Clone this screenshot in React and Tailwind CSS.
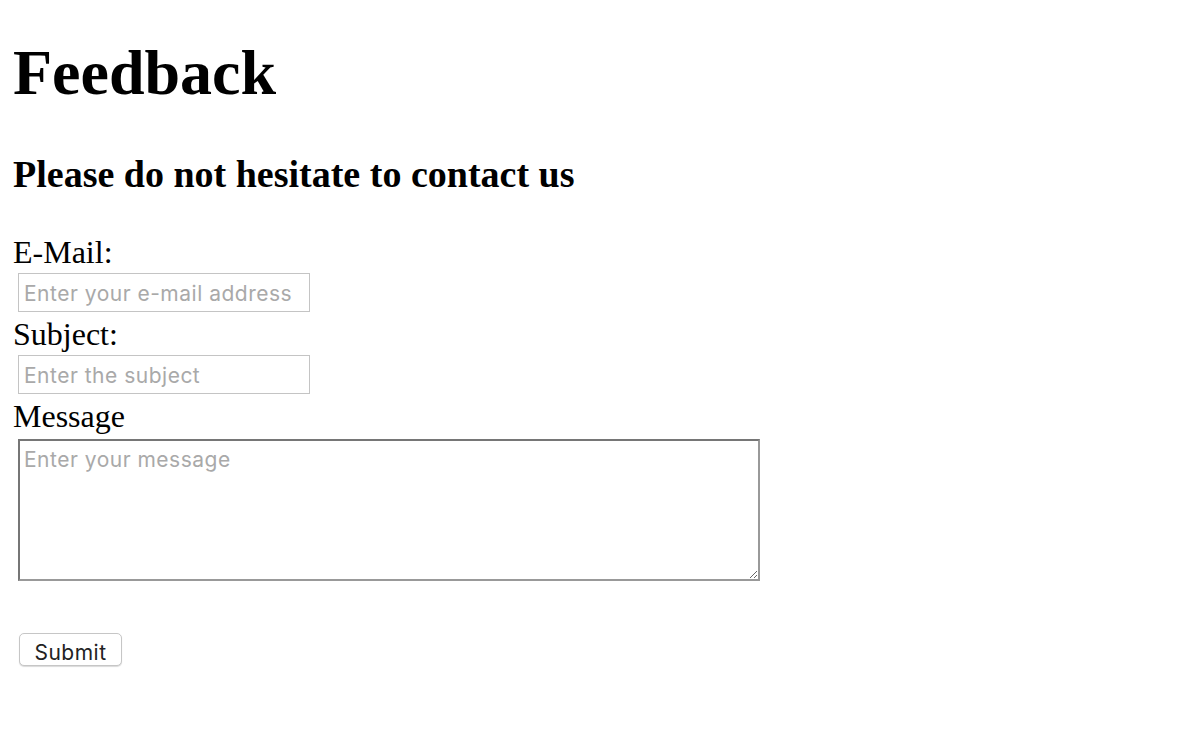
export default function App() {
  return (
    <div className="min-h-screen bg-white pl-[13px] text-black [font-family:'Liberation_Serif','Times_New_Roman',serif]">
      <h1 className="pt-[36px] text-[64px] font-bold leading-[74px]">Feedback</h1>
      <h2 className="mt-[42px] text-[38px] font-bold leading-[44px]">
        Please do not hesitate to contact us
      </h2>

      <form className="mt-[38px] flex flex-col items-start" onSubmit={(e) => e.preventDefault()}>
        <label htmlFor="email" className="text-[32px] leading-[37px]">
          E-Mail:
        </label>
        <input
          id="email"
          type="email"
          placeholder="Enter your e-mail address"
          className="mt-[2px] ml-[5px] h-[39px] w-[292px] border border-[#c4c4c4] bg-white pt-[2px] pl-[5px] text-[21px] tracking-[0.5px] text-black outline-none placeholder:text-[#a9a9a9] [font-family:Inter,'Noto_Sans',sans-serif]"
        />

        <label htmlFor="subject" className="mt-[4px] text-[32px] leading-[37px]">
          Subject:
        </label>
        <input
          id="subject"
          type="text"
          placeholder="Enter the subject"
          className="mt-[2px] ml-[5px] h-[39px] w-[292px] border border-[#c4c4c4] bg-white pt-[2px] pl-[5px] text-[21px] tracking-[0.5px] text-black outline-none placeholder:text-[#a9a9a9] [font-family:Inter,'Noto_Sans',sans-serif]"
        />

        <label htmlFor="message" className="mt-[4px] text-[32px] leading-[37px]">
          Message
        </label>
        <textarea
          id="message"
          placeholder="Enter your message"
          className="mt-[4px] ml-[5px] h-[142px] w-[742px] resize border-2 border-t-[#767676] border-l-[#767676] border-r-[#999999] border-b-[#999999] bg-white px-[4px] pt-[7px] text-[21px] leading-[24px] tracking-[0.5px] text-black outline-none placeholder:text-[#a9a9a9] [font-family:Inter,'Noto_Sans',sans-serif]"
        />

        <button
          type="submit"
          className="mt-[52px] ml-[6px] h-[33px] w-[103px] rounded-[5px] border border-[#c6c6c6] bg-white pt-[3px] text-[21px] tracking-[0.5px] text-[#222222] shadow-[0_1px_1px_rgba(0,0,0,0.15)] [font-family:Inter,'Noto_Sans',sans-serif]"
        >
          Submit
        </button>
      </form>
    </div>
  );
}
